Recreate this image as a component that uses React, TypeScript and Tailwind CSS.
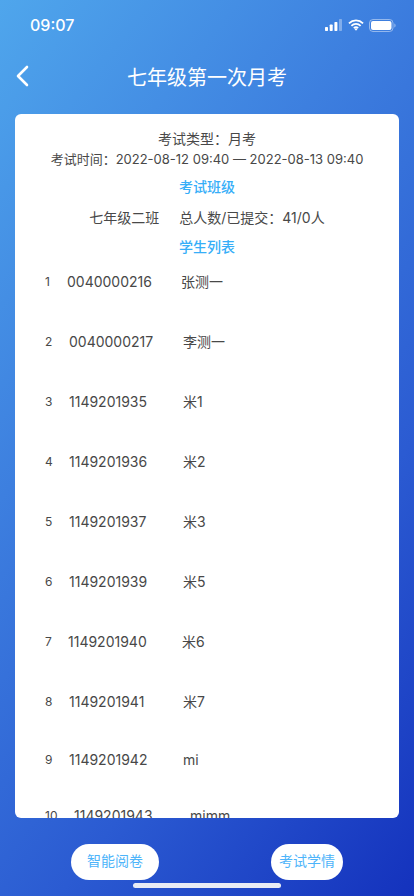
const rows = [
  { n: "1", id: "0040000216", name: "张测一", shift: "ml-0", w: "w-[114px]", h: "h-[60px]" },
  { n: "2", id: "0040000217", name: "李测一", shift: "ml-[2px]", w: "w-[114px]", h: "h-[60px]" },
  { n: "3", id: "1149201935", name: "米1", shift: "ml-[2px]", w: "w-[114px]", h: "h-[60px]" },
  { n: "4", id: "1149201936", name: "米2", shift: "ml-[2px]", w: "w-[114px]", h: "h-[60px]" },
  { n: "5", id: "1149201937", name: "米3", shift: "ml-[2px]", w: "w-[114px]", h: "h-[60px]" },
  { n: "6", id: "1149201939", name: "米5", shift: "ml-[2px]", w: "w-[114px]", h: "h-[60px]" },
  { n: "7", id: "1149201940", name: "米6", shift: "ml-px", w: "w-[114px]", h: "h-[60px]" },
  { n: "8", id: "1149201941", name: "米7", shift: "ml-[2px]", w: "w-[114px]", h: "h-[58px]" },
  { n: "9", id: "1149201942", name: "mi", shift: "ml-[2px]", w: "w-[114px]", h: "h-[56px]" },
  { n: "10", id: "1149201943", name: "mimm", shift: "ml-[7px]", w: "w-[116px]", h: "h-[60px]" },
];

function StatusIcons() {
  return (
    <div className="flex items-center gap-[6px]">
      <svg width="17" height="12" viewBox="0 0 17 12" fill="white">
        <rect x="0" y="8" width="3" height="4" rx="0.7" />
        <rect x="4.7" y="5.5" width="3" height="6.5" rx="0.7" />
        <rect x="9.4" y="3" width="3" height="9" rx="0.7" />
        <rect x="14" y="0" width="3" height="12" rx="0.7" fill="white" fillOpacity="0.35" />
      </svg>
      <svg width="16" height="12" viewBox="0 0 17 12" fill="none" stroke="white" strokeWidth="1.9">
        <path d="M1 4.2a10.8 10.8 0 0 1 15 0" />
        <path d="M3.6 6.9a7 7 0 0 1 9.8 0" />
        <path d="M6.2 9.4a3.3 3.3 0 0 1 4.6 0" />
        <path d="M8.5 12 6.9 10.3a2.3 2.3 0 0 1 3.2 0Z" fill="white" stroke="none" />
      </svg>
      <svg className="-ml-[1px]" width="27" height="13" viewBox="0 0 27 13" fill="none">
        <rect x="0.5" y="0.5" width="23.5" height="12" rx="3.5" stroke="white" strokeOpacity="0.45" />
        <rect x="2" y="2" width="20.5" height="9" rx="2" fill="white" />
        <path d="M25.3 4.5c.8.3 1.3 1.1 1.3 2s-.5 1.7-1.3 2Z" fill="white" fillOpacity="0.45" />
      </svg>
    </div>
  );
}

export default function App() {
  return (
    <div className="relative h-[896px] w-[414px] overflow-hidden bg-[linear-gradient(128deg,#4fa6ec_0%,#3d7fdf_35%,#2b5bd2_68%,#1432bd_100%)] font-['Inter','Noto_Sans_CJK_SC',sans-serif] text-[#484848]">
      <div className="flex h-[50px] items-center justify-between pl-[30px] pr-[18px] text-white">
        <span className="text-[16px] font-medium leading-none">09:07</span>
        <StatusIcons />
      </div>
      <div className="relative flex h-[54px] items-center justify-center pt-[2px]">
        <svg className="absolute left-[15px] top-[15px]" width="15" height="22" viewBox="0 0 15 22" fill="none" stroke="white" strokeWidth="2.6" strokeLinecap="round" strokeLinejoin="round">
          <path d="M12 2 3 11l9 9" />
        </svg>
        <span className="text-[20px] leading-none text-white">七年级第一次月考</span>
      </div>
      <div className="mx-[15px] mt-[10px] h-[704px] overflow-hidden rounded-[6px] bg-white">
        <div className="flex flex-col items-center pt-[15px] text-[14px] leading-[20px]">
          <div>考试类型：月考</div>
          <div className="text-[13px]">考试时间：2022-08-12 09:40 — 2022-08-13 09:40</div>
          <div className="mt-[8px] font-medium text-[#36aef8]">考试班级</div>
          <div className="mt-[11px] flex">
            <span className="w-[90px]">七年级二班</span>
            <span>总人数/已提交：41/0人</span>
          </div>
          <div className="mt-[9px] font-medium text-[#36aef8]">学生列表</div>
        </div>
        <div className="pt-[15px]">
          {rows.map((r) => (
            <div key={r.n} className={`flex ${r.h} items-start pl-[30px] text-[14px] leading-[20px]`}>
              <span className="w-[22px] text-[12px]">{r.n}</span>
              <div className={`flex ${r.shift}`}>
                <span className={r.w}>{r.id}</span>
                <span>{r.name}</span>
              </div>
            </div>
          ))}
        </div>
      </div>
      <div className="mt-[26px] flex pl-[71px] text-[14px] leading-[18px] text-[#4db4fa]">
        <button className="h-[36px] w-[88px] rounded-full bg-white pb-[2px]">智能阅卷</button>
        <button className="ml-[112px] h-[36px] w-[72px] rounded-full bg-white pb-[2px]">考试学情</button>
      </div>
      <div className="absolute left-[133px] top-[883px] h-[5px] w-[148px] rounded-full bg-[#e9ecf5]" />
    </div>
  );
}
